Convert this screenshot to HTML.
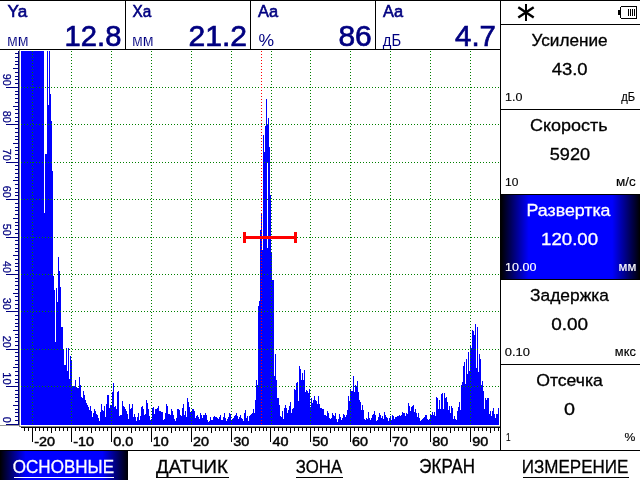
<!DOCTYPE html>
<html><head><meta charset="utf-8"><title>A-scan</title>
<style>
html,body{margin:0;padding:0;background:#fff;width:640px;height:480px;overflow:hidden}
svg{display:block;font-family:"Liberation Sans",sans-serif;will-change:transform}
</style></head><body>
<svg width="640" height="480" viewBox="0 0 640 480">
<defs>
<linearGradient id="hg" x1="0" x2="1" y1="0" y2="0">
<stop offset="0" stop-color="#000000"/><stop offset="0.2" stop-color="#0000ff"/><stop offset="0.8" stop-color="#0000ff"/><stop offset="1" stop-color="#000000"/>
</linearGradient>
</defs>
<rect x="0" y="0" width="640" height="1" fill="#000" shape-rendering="crispEdges"/>
<rect x="0" y="49" width="501" height="1" fill="#000" shape-rendering="crispEdges"/>
<rect x="125" y="0" width="1" height="50" fill="#000" shape-rendering="crispEdges"/>
<rect x="250" y="0" width="1" height="50" fill="#000" shape-rendering="crispEdges"/>
<rect x="375" y="0" width="1" height="50" fill="#000" shape-rendering="crispEdges"/>
<rect x="500" y="0" width="1" height="451" fill="#000" shape-rendering="crispEdges"/>
<rect x="500" y="24" width="140" height="1" fill="#000" shape-rendering="crispEdges"/>
<rect x="500" y="109" width="140" height="1" fill="#000" shape-rendering="crispEdges"/>
<rect x="500" y="194" width="140" height="1" fill="#000" shape-rendering="crispEdges"/>
<rect x="500" y="279" width="140" height="1" fill="#000" shape-rendering="crispEdges"/>
<rect x="500" y="364" width="140" height="1" fill="#000" shape-rendering="crispEdges"/>
<rect x="0" y="450" width="640" height="1" fill="#000" shape-rendering="crispEdges"/>
<rect x="19" y="50" width="1" height="377" fill="#808080" shape-rendering="crispEdges"/>
<rect x="19" y="426" width="481" height="1" fill="#808080" shape-rendering="crispEdges"/>
<rect x="21" y="427" width="480" height="1" fill="#000" shape-rendering="crispEdges"/>
<rect x="0" y="425" width="20" height="1" fill="#9a9a9a" shape-rendering="crispEdges"/>
<rect x="18" y="51" width="1" height="374" fill="#000080" shape-rendering="crispEdges"/>
<path d="M21 51h23V425h-23zM44 213h1V425h-1zM45 154h2V425h-2zM47 51h1V425h-1zM48 105h1V425h-1zM49 51h1V425h-1zM50 94h1V425h-1zM51 121h1V425h-1zM52 171h1V425h-1zM53 276h1V425h-1zM54 290h1V425h-1zM55 342h1V425h-1zM56 288h1V425h-1zM57 302h1V425h-1zM58 257h1V425h-1zM59 271h1V425h-1zM60 287h1V425h-1zM61 327h2V425h-2zM63 350h1V425h-1zM64 365h2V425h-2zM66 348h1V425h-1zM67 371h1V425h-1zM68 348h1V425h-1zM69 379h1V425h-1zM70 356h1V425h-1zM71 361h1V425h-1zM72 386h3V425h-3zM75 380h1V425h-1zM76 387h1V425h-1zM77 388h2V425h-2zM79 377h1V425h-1zM80 385h1V425h-1zM81 397h1V425h-1zM82 398h1V425h-1zM83 391h1V425h-1zM84 395h1V425h-1zM85 400h1V425h-1zM86 403h1V425h-1zM87 405h1V425h-1zM88 407h1V425h-1zM89 410h1V425h-1zM90 406h1V425h-1zM91 411h1V425h-1zM92 417h1V425h-1zM93 413h1V425h-1zM94 409h1V425h-1zM95 411h1V425h-1zM96 414h1V425h-1zM97 415h1V425h-1zM98 418h1V425h-1zM99 421h1V425h-1zM100 412h1V425h-1zM101 404h1V425h-1zM102 410h1V425h-1zM103 411h1V425h-1zM104 406h1V425h-1zM105 417h1V425h-1zM106 404h1V425h-1zM107 395h2V425h-2zM109 408h1V425h-1zM110 405h2V425h-2zM112 392h1V425h-1zM113 383h1V425h-1zM114 407h1V425h-1zM115 406h1V425h-1zM116 409h1V425h-1zM117 392h1V425h-1zM118 391h1V425h-1zM119 416h1V425h-1zM120 415h2V425h-2zM122 401h1V425h-1zM123 406h1V425h-1zM124 407h1V425h-1zM125 409h1V425h-1zM126 411h1V425h-1zM127 414h1V425h-1zM128 419h1V425h-1zM129 404h1V425h-1zM130 409h1V425h-1zM131 408h1V425h-1zM132 404h1V425h-1zM133 417h1V425h-1zM134 414h1V425h-1zM135 417h1V425h-1zM136 421h1V425h-1zM137 417h1V425h-1zM138 413h1V425h-1zM139 420h1V425h-1zM140 416h1V425h-1zM141 407h1V425h-1zM142 406h1V425h-1zM143 409h1V425h-1zM144 415h1V425h-1zM145 414h1V425h-1zM146 400h1V425h-1zM147 403h1V425h-1zM148 409h1V425h-1zM149 416h1V425h-1zM150 420h1V425h-1zM151 419h1V425h-1zM152 408h1V425h-1zM153 407h1V425h-1zM154 414h1V425h-1zM155 409h2V425h-2zM157 408h1V425h-1zM158 406h1V425h-1zM159 411h2V425h-2zM161 412h2V425h-2zM163 420h1V425h-1zM164 419h1V425h-1zM165 413h1V425h-1zM166 404h1V425h-1zM167 406h1V425h-1zM168 414h2V425h-2zM170 415h1V425h-1zM171 409h1V425h-1zM172 411h1V425h-1zM173 415h1V425h-1zM174 419h1V425h-1zM175 421h1V425h-1zM176 418h1V425h-1zM177 409h2V425h-2zM179 410h1V425h-1zM180 415h1V425h-1zM181 416h1V425h-1zM182 408h1V425h-1zM183 404h1V425h-1zM184 415h1V425h-1zM185 411h1V425h-1zM186 417h1V425h-1zM187 398h1V425h-1zM188 402h1V425h-1zM189 407h1V425h-1zM190 412h1V425h-1zM191 411h1V425h-1zM192 409h2V425h-2zM194 411h1V425h-1zM195 418h1V425h-1zM196 416h1V425h-1zM197 415h1V425h-1zM198 417h1V425h-1zM199 419h1V425h-1zM200 413h1V425h-1zM201 415h1V425h-1zM202 418h1V425h-1zM203 415h2V425h-2zM205 413h1V425h-1zM206 415h1V425h-1zM207 420h1V425h-1zM208 422h1V425h-1zM209 421h1V425h-1zM210 417h1V425h-1zM211 420h2V425h-2zM213 417h1V425h-1zM214 416h1V425h-1zM215 417h2V425h-2zM217 418h1V425h-1zM218 419h1V425h-1zM219 417h1V425h-1zM220 415h1V425h-1zM221 420h2V425h-2zM223 417h1V425h-1zM224 413h1V425h-1zM225 418h1V425h-1zM226 421h1V425h-1zM227 419h1V425h-1zM228 417h1V425h-1zM229 413h1V425h-1zM230 414h1V425h-1zM231 420h1V425h-1zM232 419h1V425h-1zM233 418h1V425h-1zM234 416h1V425h-1zM235 415h1V425h-1zM236 413h1V425h-1zM237 416h1V425h-1zM238 419h1V425h-1zM239 417h1V425h-1zM240 415h1V425h-1zM241 418h1V425h-1zM242 419h1V425h-1zM243 421h1V425h-1zM244 413h1V425h-1zM245 410h1V425h-1zM246 418h1V425h-1zM247 416h1V425h-1zM248 421h1V425h-1zM249 416h1V425h-1zM250 415h1V425h-1zM251 414h1V425h-1zM252 413h1V425h-1zM253 409h1V425h-1zM254 413h1V425h-1zM255 400h1V425h-1zM256 380h1V425h-1zM257 385h1V425h-1zM258 306h1V425h-1zM259 301h1V425h-1zM260 230h1V425h-1zM261 213h1V425h-1zM262 250h1V425h-1zM263 135h1V425h-1zM264 152h1V425h-1zM265 126h1V425h-1zM266 99h1V425h-1zM267 125h1V425h-1zM268 118h1V425h-1zM269 147h1V425h-1zM270 195h1V425h-1zM271 252h1V425h-1zM272 280h2V425h-2zM274 376h1V425h-1zM275 354h1V425h-1zM276 380h1V425h-1zM277 398h2V425h-2zM279 405h1V425h-1zM280 416h1V425h-1zM281 417h1V425h-1zM282 411h1V425h-1zM283 419h1V425h-1zM284 408h1V425h-1zM285 405h1V425h-1zM286 408h1V425h-1zM287 413h1V425h-1zM288 410h1V425h-1zM289 406h1V425h-1zM290 402h1V425h-1zM291 413h1V425h-1zM292 409h1V425h-1zM293 408h1V425h-1zM294 389h1V425h-1zM295 390h1V425h-1zM296 383h1V425h-1zM297 382h1V425h-1zM298 401h1V425h-1zM299 366h1V425h-1zM300 369h1V425h-1zM301 380h1V425h-1zM302 373h1V425h-1zM303 380h1V425h-1zM304 370h1V425h-1zM305 392h1V425h-1zM306 390h1V425h-1zM307 391h1V425h-1zM308 393h1V425h-1zM309 389h1V425h-1zM310 407h1V425h-1zM311 398h1V425h-1zM312 403h1V425h-1zM313 400h1V425h-1zM314 396h1V425h-1zM315 400h1V425h-1zM316 401h1V425h-1zM317 404h1V425h-1zM318 396h1V425h-1zM319 404h1V425h-1zM320 408h2V425h-2zM322 409h2V425h-2zM324 415h2V425h-2zM326 416h1V425h-1zM327 411h1V425h-1zM328 413h1V425h-1zM329 418h1V425h-1zM330 419h1V425h-1zM331 418h1V425h-1zM332 413h1V425h-1zM333 415h1V425h-1zM334 416h1V425h-1zM335 413h1V425h-1zM336 419h1V425h-1zM337 422h1V425h-1zM338 419h1V425h-1zM339 414h1V425h-1zM340 417h1V425h-1zM341 420h1V425h-1zM342 418h1V425h-1zM343 414h1V425h-1zM344 415h1V425h-1zM345 417h1V425h-1zM346 415h1V425h-1zM347 410h1V425h-1zM348 396h1V425h-1zM349 401h1V425h-1zM350 389h1V425h-1zM351 391h2V425h-2zM353 376h1V425h-1zM354 392h1V425h-1zM355 385h1V425h-1zM356 386h1V425h-1zM357 381h1V425h-1zM358 392h1V425h-1zM359 400h1V425h-1zM360 402h1V425h-1zM361 410h1V425h-1zM362 405h1V425h-1zM363 410h1V425h-1zM364 419h1V425h-1zM365 420h1V425h-1zM366 418h1V425h-1zM367 419h1V425h-1zM368 412h1V425h-1zM369 418h1V425h-1zM370 420h1V425h-1zM371 418h1V425h-1zM372 415h1V425h-1zM373 414h1V425h-1zM374 411h1V425h-1zM375 415h1V425h-1zM376 421h1V425h-1zM377 420h1V425h-1zM378 417h1V425h-1zM379 413h1V425h-1zM380 415h1V425h-1zM381 418h1V425h-1zM382 416h1V425h-1zM383 419h1V425h-1zM384 412h1V425h-1zM385 415h1V425h-1zM386 417h1V425h-1zM387 418h1V425h-1zM388 421h1V425h-1zM389 418h1V425h-1zM390 416h1V425h-1zM391 420h1V425h-1zM392 415h1V425h-1zM393 416h1V425h-1zM394 419h1V425h-1zM395 417h2V425h-2zM397 416h2V425h-2zM399 415h1V425h-1zM400 416h1V425h-1zM401 415h1V425h-1zM402 412h1V425h-1zM403 413h2V425h-2zM405 416h1V425h-1zM406 413h1V425h-1zM407 414h1V425h-1zM408 403h1V425h-1zM409 406h1V425h-1zM410 411h1V425h-1zM411 407h1V425h-1zM412 406h1V425h-1zM413 405h1V425h-1zM414 412h1V425h-1zM415 409h1V425h-1zM416 413h1V425h-1zM417 417h1V425h-1zM418 413h1V425h-1zM419 418h1V425h-1zM420 421h1V425h-1zM421 420h1V425h-1zM422 419h1V425h-1zM423 418h1V425h-1zM424 417h1V425h-1zM425 415h2V425h-2zM427 419h1V425h-1zM428 420h1V425h-1zM429 419h1V425h-1zM430 415h2V425h-2zM432 412h1V425h-1zM433 415h1V425h-1zM434 412h1V425h-1zM435 416h1V425h-1zM436 397h1V425h-1zM437 398h1V425h-1zM438 409h1V425h-1zM439 400h1V425h-1zM440 409h1V425h-1zM441 394h1V425h-1zM442 393h1V425h-1zM443 409h1V425h-1zM444 393h1V425h-1zM445 398h1V425h-1zM446 397h1V425h-1zM447 402h1V425h-1zM448 410h1V425h-1zM449 406h1V425h-1zM450 413h1V425h-1zM451 406h1V425h-1zM452 408h1V425h-1zM453 419h1V425h-1zM454 416h1V425h-1zM455 419h1V425h-1zM456 420h1V425h-1zM457 411h1V425h-1zM458 407h1V425h-1zM459 402h1V425h-1zM460 410h1V425h-1zM461 385h1V425h-1zM462 382h1V425h-1zM463 366h1V425h-1zM464 362h1V425h-1zM465 384h1V425h-1zM466 359h1V425h-1zM467 374h1V425h-1zM468 352h1V425h-1zM469 371h1V425h-1zM470 346h1V425h-1zM471 348h1V425h-1zM472 330h1V425h-1zM473 331h1V425h-1zM474 335h1V425h-1zM475 324h1V425h-1zM476 368h1V425h-1zM477 327h1V425h-1zM478 372h1V425h-1zM479 354h1V425h-1zM480 359h1V425h-1zM481 385h1V425h-1zM482 381h1V425h-1zM483 391h1V425h-1zM484 409h1V425h-1zM485 398h1V425h-1zM486 400h1V425h-1zM487 398h2V425h-2zM489 414h1V425h-1zM490 411h1V425h-1zM491 416h1V425h-1zM492 411h1V425h-1zM493 408h1V425h-1zM494 414h1V425h-1zM495 418h1V425h-1zM496 414h2V425h-2zM498 408h1V425h-1z" fill="#0000ff" shape-rendering="crispEdges"/>
<rect x="267" y="163" width="1" height="85" fill="#fff" shape-rendering="crispEdges"/>
<g stroke="#008000" stroke-width="1" stroke-dasharray="1 2" shape-rendering="crispEdges"><line x1="32.5" y1="51" x2="32.5" y2="425" /><line x1="71.5" y1="51" x2="71.5" y2="425" /><line x1="111.5" y1="51" x2="111.5" y2="425" /><line x1="151.5" y1="51" x2="151.5" y2="425" /><line x1="191.5" y1="51" x2="191.5" y2="425" /><line x1="231.5" y1="51" x2="231.5" y2="425" /><line x1="271.5" y1="51" x2="271.5" y2="425" /><line x1="310.5" y1="51" x2="310.5" y2="425" /><line x1="350.5" y1="51" x2="350.5" y2="425" /><line x1="390.5" y1="51" x2="390.5" y2="425" /><line x1="430.5" y1="51" x2="430.5" y2="425" /><line x1="470.5" y1="51" x2="470.5" y2="425" /></g>
<g stroke="#008000" stroke-width="1" stroke-dasharray="1 2" shape-rendering="crispEdges"><line x1="21" y1="386.5" x2="500" y2="386.5" /><line x1="21" y1="349.5" x2="500" y2="349.5" /><line x1="21" y1="311.5" x2="500" y2="311.5" /><line x1="21" y1="274.5" x2="500" y2="274.5" /><line x1="21" y1="237.5" x2="500" y2="237.5" /><line x1="21" y1="199.5" x2="500" y2="199.5" /><line x1="21" y1="162.5" x2="500" y2="162.5" /><line x1="21" y1="124.5" x2="500" y2="124.5" /><line x1="21" y1="87.5" x2="500" y2="87.5" /></g>
<line x1="261.5" y1="51" x2="261.5" y2="425" stroke="#ff0000" stroke-width="1" stroke-dasharray="1 2" shape-rendering="crispEdges"/>
<rect x="243" y="236" width="54" height="3" fill="#ff0000" shape-rendering="crispEdges"/>
<rect x="243" y="232" width="3" height="11" fill="#ff0000" shape-rendering="crispEdges"/>
<rect x="294" y="232" width="3" height="11" fill="#ff0000" shape-rendering="crispEdges"/>
<rect x="6" y="424" width="13" height="1" fill="#000080" shape-rendering="crispEdges"/>
<rect x="15" y="420" width="4" height="1" fill="#000080" shape-rendering="crispEdges"/>
<rect x="15" y="416" width="4" height="1" fill="#000080" shape-rendering="crispEdges"/>
<rect x="15" y="412" width="4" height="1" fill="#000080" shape-rendering="crispEdges"/>
<rect x="15" y="409" width="4" height="1" fill="#000080" shape-rendering="crispEdges"/>
<rect x="13" y="405" width="6" height="1" fill="#000080" shape-rendering="crispEdges"/>
<rect x="15" y="401" width="4" height="1" fill="#000080" shape-rendering="crispEdges"/>
<rect x="15" y="397" width="4" height="1" fill="#000080" shape-rendering="crispEdges"/>
<rect x="15" y="394" width="4" height="1" fill="#000080" shape-rendering="crispEdges"/>
<rect x="15" y="390" width="4" height="1" fill="#000080" shape-rendering="crispEdges"/>
<rect x="6" y="386" width="13" height="1" fill="#000080" shape-rendering="crispEdges"/>
<rect x="15" y="382" width="4" height="1" fill="#000080" shape-rendering="crispEdges"/>
<rect x="15" y="379" width="4" height="1" fill="#000080" shape-rendering="crispEdges"/>
<rect x="15" y="375" width="4" height="1" fill="#000080" shape-rendering="crispEdges"/>
<rect x="15" y="371" width="4" height="1" fill="#000080" shape-rendering="crispEdges"/>
<rect x="13" y="367" width="6" height="1" fill="#000080" shape-rendering="crispEdges"/>
<rect x="15" y="364" width="4" height="1" fill="#000080" shape-rendering="crispEdges"/>
<rect x="15" y="360" width="4" height="1" fill="#000080" shape-rendering="crispEdges"/>
<rect x="15" y="356" width="4" height="1" fill="#000080" shape-rendering="crispEdges"/>
<rect x="15" y="352" width="4" height="1" fill="#000080" shape-rendering="crispEdges"/>
<rect x="6" y="349" width="13" height="1" fill="#000080" shape-rendering="crispEdges"/>
<rect x="15" y="345" width="4" height="1" fill="#000080" shape-rendering="crispEdges"/>
<rect x="15" y="341" width="4" height="1" fill="#000080" shape-rendering="crispEdges"/>
<rect x="15" y="337" width="4" height="1" fill="#000080" shape-rendering="crispEdges"/>
<rect x="15" y="334" width="4" height="1" fill="#000080" shape-rendering="crispEdges"/>
<rect x="13" y="330" width="6" height="1" fill="#000080" shape-rendering="crispEdges"/>
<rect x="15" y="326" width="4" height="1" fill="#000080" shape-rendering="crispEdges"/>
<rect x="15" y="323" width="4" height="1" fill="#000080" shape-rendering="crispEdges"/>
<rect x="15" y="319" width="4" height="1" fill="#000080" shape-rendering="crispEdges"/>
<rect x="15" y="315" width="4" height="1" fill="#000080" shape-rendering="crispEdges"/>
<rect x="6" y="311" width="13" height="1" fill="#000080" shape-rendering="crispEdges"/>
<rect x="15" y="308" width="4" height="1" fill="#000080" shape-rendering="crispEdges"/>
<rect x="15" y="304" width="4" height="1" fill="#000080" shape-rendering="crispEdges"/>
<rect x="15" y="300" width="4" height="1" fill="#000080" shape-rendering="crispEdges"/>
<rect x="15" y="296" width="4" height="1" fill="#000080" shape-rendering="crispEdges"/>
<rect x="13" y="293" width="6" height="1" fill="#000080" shape-rendering="crispEdges"/>
<rect x="15" y="289" width="4" height="1" fill="#000080" shape-rendering="crispEdges"/>
<rect x="15" y="285" width="4" height="1" fill="#000080" shape-rendering="crispEdges"/>
<rect x="15" y="281" width="4" height="1" fill="#000080" shape-rendering="crispEdges"/>
<rect x="15" y="278" width="4" height="1" fill="#000080" shape-rendering="crispEdges"/>
<rect x="6" y="274" width="13" height="1" fill="#000080" shape-rendering="crispEdges"/>
<rect x="15" y="270" width="4" height="1" fill="#000080" shape-rendering="crispEdges"/>
<rect x="15" y="266" width="4" height="1" fill="#000080" shape-rendering="crispEdges"/>
<rect x="15" y="263" width="4" height="1" fill="#000080" shape-rendering="crispEdges"/>
<rect x="15" y="259" width="4" height="1" fill="#000080" shape-rendering="crispEdges"/>
<rect x="13" y="255" width="6" height="1" fill="#000080" shape-rendering="crispEdges"/>
<rect x="15" y="251" width="4" height="1" fill="#000080" shape-rendering="crispEdges"/>
<rect x="15" y="248" width="4" height="1" fill="#000080" shape-rendering="crispEdges"/>
<rect x="15" y="244" width="4" height="1" fill="#000080" shape-rendering="crispEdges"/>
<rect x="15" y="240" width="4" height="1" fill="#000080" shape-rendering="crispEdges"/>
<rect x="6" y="237" width="13" height="1" fill="#000080" shape-rendering="crispEdges"/>
<rect x="15" y="233" width="4" height="1" fill="#000080" shape-rendering="crispEdges"/>
<rect x="15" y="229" width="4" height="1" fill="#000080" shape-rendering="crispEdges"/>
<rect x="15" y="225" width="4" height="1" fill="#000080" shape-rendering="crispEdges"/>
<rect x="15" y="222" width="4" height="1" fill="#000080" shape-rendering="crispEdges"/>
<rect x="13" y="218" width="6" height="1" fill="#000080" shape-rendering="crispEdges"/>
<rect x="15" y="214" width="4" height="1" fill="#000080" shape-rendering="crispEdges"/>
<rect x="15" y="210" width="4" height="1" fill="#000080" shape-rendering="crispEdges"/>
<rect x="15" y="207" width="4" height="1" fill="#000080" shape-rendering="crispEdges"/>
<rect x="15" y="203" width="4" height="1" fill="#000080" shape-rendering="crispEdges"/>
<rect x="6" y="199" width="13" height="1" fill="#000080" shape-rendering="crispEdges"/>
<rect x="15" y="195" width="4" height="1" fill="#000080" shape-rendering="crispEdges"/>
<rect x="15" y="192" width="4" height="1" fill="#000080" shape-rendering="crispEdges"/>
<rect x="15" y="188" width="4" height="1" fill="#000080" shape-rendering="crispEdges"/>
<rect x="15" y="184" width="4" height="1" fill="#000080" shape-rendering="crispEdges"/>
<rect x="13" y="180" width="6" height="1" fill="#000080" shape-rendering="crispEdges"/>
<rect x="15" y="177" width="4" height="1" fill="#000080" shape-rendering="crispEdges"/>
<rect x="15" y="173" width="4" height="1" fill="#000080" shape-rendering="crispEdges"/>
<rect x="15" y="169" width="4" height="1" fill="#000080" shape-rendering="crispEdges"/>
<rect x="15" y="165" width="4" height="1" fill="#000080" shape-rendering="crispEdges"/>
<rect x="6" y="162" width="13" height="1" fill="#000080" shape-rendering="crispEdges"/>
<rect x="15" y="158" width="4" height="1" fill="#000080" shape-rendering="crispEdges"/>
<rect x="15" y="154" width="4" height="1" fill="#000080" shape-rendering="crispEdges"/>
<rect x="15" y="150" width="4" height="1" fill="#000080" shape-rendering="crispEdges"/>
<rect x="15" y="147" width="4" height="1" fill="#000080" shape-rendering="crispEdges"/>
<rect x="13" y="143" width="6" height="1" fill="#000080" shape-rendering="crispEdges"/>
<rect x="15" y="139" width="4" height="1" fill="#000080" shape-rendering="crispEdges"/>
<rect x="15" y="136" width="4" height="1" fill="#000080" shape-rendering="crispEdges"/>
<rect x="15" y="132" width="4" height="1" fill="#000080" shape-rendering="crispEdges"/>
<rect x="15" y="128" width="4" height="1" fill="#000080" shape-rendering="crispEdges"/>
<rect x="6" y="124" width="13" height="1" fill="#000080" shape-rendering="crispEdges"/>
<rect x="15" y="121" width="4" height="1" fill="#000080" shape-rendering="crispEdges"/>
<rect x="15" y="117" width="4" height="1" fill="#000080" shape-rendering="crispEdges"/>
<rect x="15" y="113" width="4" height="1" fill="#000080" shape-rendering="crispEdges"/>
<rect x="15" y="109" width="4" height="1" fill="#000080" shape-rendering="crispEdges"/>
<rect x="13" y="106" width="6" height="1" fill="#000080" shape-rendering="crispEdges"/>
<rect x="15" y="102" width="4" height="1" fill="#000080" shape-rendering="crispEdges"/>
<rect x="15" y="98" width="4" height="1" fill="#000080" shape-rendering="crispEdges"/>
<rect x="15" y="94" width="4" height="1" fill="#000080" shape-rendering="crispEdges"/>
<rect x="15" y="91" width="4" height="1" fill="#000080" shape-rendering="crispEdges"/>
<rect x="6" y="87" width="13" height="1" fill="#000080" shape-rendering="crispEdges"/>
<rect x="15" y="83" width="4" height="1" fill="#000080" shape-rendering="crispEdges"/>
<rect x="15" y="79" width="4" height="1" fill="#000080" shape-rendering="crispEdges"/>
<rect x="15" y="76" width="4" height="1" fill="#000080" shape-rendering="crispEdges"/>
<rect x="15" y="72" width="4" height="1" fill="#000080" shape-rendering="crispEdges"/>
<rect x="13" y="68" width="6" height="1" fill="#000080" shape-rendering="crispEdges"/>
<rect x="15" y="64" width="4" height="1" fill="#000080" shape-rendering="crispEdges"/>
<rect x="15" y="61" width="4" height="1" fill="#000080" shape-rendering="crispEdges"/>
<rect x="15" y="57" width="4" height="1" fill="#000080" shape-rendering="crispEdges"/>
<rect x="15" y="53" width="4" height="1" fill="#000080" shape-rendering="crispEdges"/>
<text transform="translate(3,416.66) rotate(90) scale(0.9426,1)" font-size="11.71" fill="#000080" stroke="#000080" stroke-width="0.25">0</text>
<text transform="translate(3,372.36) rotate(90) scale(0.9561,1)" font-size="11.71" fill="#000080" stroke="#000080" stroke-width="0.25">10</text>
<text transform="translate(3,335.65) rotate(90) scale(0.9328,1)" font-size="11.71" fill="#000080" stroke="#000080" stroke-width="0.25">20</text>
<text transform="translate(3,297.77) rotate(90) scale(0.9238,1)" font-size="11.71" fill="#000080" stroke="#000080" stroke-width="0.25">30</text>
<text transform="translate(3,260.99) rotate(90) scale(0.9063,1)" font-size="11.71" fill="#000080" stroke="#000080" stroke-width="0.25">40</text>
<text transform="translate(3,223.77) rotate(90) scale(0.9238,1)" font-size="11.71" fill="#000080" stroke="#000080" stroke-width="0.25">50</text>
<text transform="translate(3,185.65) rotate(90) scale(0.9328,1)" font-size="11.71" fill="#000080" stroke="#000080" stroke-width="0.25">60</text>
<text transform="translate(3,148.65) rotate(90) scale(0.9328,1)" font-size="11.71" fill="#000080" stroke="#000080" stroke-width="0.25">70</text>
<text transform="translate(3,110.71) rotate(90) scale(0.9283,1)" font-size="11.71" fill="#000080" stroke="#000080" stroke-width="0.25">80</text>
<text transform="translate(3,73.71) rotate(90) scale(0.9283,1)" font-size="11.71" fill="#000080" stroke="#000080" stroke-width="0.25">90</text>
<rect x="24" y="427" width="1" height="4" fill="#000" shape-rendering="crispEdges"/>
<rect x="28" y="427" width="1" height="4" fill="#000" shape-rendering="crispEdges"/>
<rect x="32" y="427" width="1" height="15" fill="#000" shape-rendering="crispEdges"/>
<rect x="35" y="427" width="1" height="4" fill="#000" shape-rendering="crispEdges"/>
<rect x="39" y="427" width="1" height="4" fill="#000" shape-rendering="crispEdges"/>
<rect x="43" y="427" width="1" height="4" fill="#000" shape-rendering="crispEdges"/>
<rect x="47" y="427" width="1" height="4" fill="#000" shape-rendering="crispEdges"/>
<rect x="51" y="427" width="1" height="6" fill="#000" shape-rendering="crispEdges"/>
<rect x="55" y="427" width="1" height="4" fill="#000" shape-rendering="crispEdges"/>
<rect x="59" y="427" width="1" height="4" fill="#000" shape-rendering="crispEdges"/>
<rect x="63" y="427" width="1" height="4" fill="#000" shape-rendering="crispEdges"/>
<rect x="67" y="427" width="1" height="4" fill="#000" shape-rendering="crispEdges"/>
<rect x="71" y="427" width="1" height="15" fill="#000" shape-rendering="crispEdges"/>
<rect x="75" y="427" width="1" height="4" fill="#000" shape-rendering="crispEdges"/>
<rect x="79" y="427" width="1" height="4" fill="#000" shape-rendering="crispEdges"/>
<rect x="83" y="427" width="1" height="4" fill="#000" shape-rendering="crispEdges"/>
<rect x="87" y="427" width="1" height="4" fill="#000" shape-rendering="crispEdges"/>
<rect x="91" y="427" width="1" height="6" fill="#000" shape-rendering="crispEdges"/>
<rect x="95" y="427" width="1" height="4" fill="#000" shape-rendering="crispEdges"/>
<rect x="99" y="427" width="1" height="4" fill="#000" shape-rendering="crispEdges"/>
<rect x="103" y="427" width="1" height="4" fill="#000" shape-rendering="crispEdges"/>
<rect x="107" y="427" width="1" height="4" fill="#000" shape-rendering="crispEdges"/>
<rect x="111" y="427" width="1" height="15" fill="#000" shape-rendering="crispEdges"/>
<rect x="115" y="427" width="1" height="4" fill="#000" shape-rendering="crispEdges"/>
<rect x="119" y="427" width="1" height="4" fill="#000" shape-rendering="crispEdges"/>
<rect x="123" y="427" width="1" height="4" fill="#000" shape-rendering="crispEdges"/>
<rect x="127" y="427" width="1" height="4" fill="#000" shape-rendering="crispEdges"/>
<rect x="131" y="427" width="1" height="6" fill="#000" shape-rendering="crispEdges"/>
<rect x="135" y="427" width="1" height="4" fill="#000" shape-rendering="crispEdges"/>
<rect x="139" y="427" width="1" height="4" fill="#000" shape-rendering="crispEdges"/>
<rect x="143" y="427" width="1" height="4" fill="#000" shape-rendering="crispEdges"/>
<rect x="147" y="427" width="1" height="4" fill="#000" shape-rendering="crispEdges"/>
<rect x="151" y="427" width="1" height="15" fill="#000" shape-rendering="crispEdges"/>
<rect x="155" y="427" width="1" height="4" fill="#000" shape-rendering="crispEdges"/>
<rect x="159" y="427" width="1" height="4" fill="#000" shape-rendering="crispEdges"/>
<rect x="163" y="427" width="1" height="4" fill="#000" shape-rendering="crispEdges"/>
<rect x="167" y="427" width="1" height="4" fill="#000" shape-rendering="crispEdges"/>
<rect x="171" y="427" width="1" height="6" fill="#000" shape-rendering="crispEdges"/>
<rect x="175" y="427" width="1" height="4" fill="#000" shape-rendering="crispEdges"/>
<rect x="179" y="427" width="1" height="4" fill="#000" shape-rendering="crispEdges"/>
<rect x="183" y="427" width="1" height="4" fill="#000" shape-rendering="crispEdges"/>
<rect x="187" y="427" width="1" height="4" fill="#000" shape-rendering="crispEdges"/>
<rect x="191" y="427" width="1" height="15" fill="#000" shape-rendering="crispEdges"/>
<rect x="195" y="427" width="1" height="4" fill="#000" shape-rendering="crispEdges"/>
<rect x="199" y="427" width="1" height="4" fill="#000" shape-rendering="crispEdges"/>
<rect x="203" y="427" width="1" height="4" fill="#000" shape-rendering="crispEdges"/>
<rect x="207" y="427" width="1" height="4" fill="#000" shape-rendering="crispEdges"/>
<rect x="211" y="427" width="1" height="6" fill="#000" shape-rendering="crispEdges"/>
<rect x="215" y="427" width="1" height="4" fill="#000" shape-rendering="crispEdges"/>
<rect x="219" y="427" width="1" height="4" fill="#000" shape-rendering="crispEdges"/>
<rect x="223" y="427" width="1" height="4" fill="#000" shape-rendering="crispEdges"/>
<rect x="227" y="427" width="1" height="4" fill="#000" shape-rendering="crispEdges"/>
<rect x="231" y="427" width="1" height="15" fill="#000" shape-rendering="crispEdges"/>
<rect x="235" y="427" width="1" height="4" fill="#000" shape-rendering="crispEdges"/>
<rect x="239" y="427" width="1" height="4" fill="#000" shape-rendering="crispEdges"/>
<rect x="243" y="427" width="1" height="4" fill="#000" shape-rendering="crispEdges"/>
<rect x="247" y="427" width="1" height="4" fill="#000" shape-rendering="crispEdges"/>
<rect x="251" y="427" width="1" height="6" fill="#000" shape-rendering="crispEdges"/>
<rect x="255" y="427" width="1" height="4" fill="#000" shape-rendering="crispEdges"/>
<rect x="259" y="427" width="1" height="4" fill="#000" shape-rendering="crispEdges"/>
<rect x="263" y="427" width="1" height="4" fill="#000" shape-rendering="crispEdges"/>
<rect x="266" y="427" width="1" height="4" fill="#000" shape-rendering="crispEdges"/>
<rect x="270" y="427" width="1" height="15" fill="#000" shape-rendering="crispEdges"/>
<rect x="274" y="427" width="1" height="4" fill="#000" shape-rendering="crispEdges"/>
<rect x="278" y="427" width="1" height="4" fill="#000" shape-rendering="crispEdges"/>
<rect x="282" y="427" width="1" height="4" fill="#000" shape-rendering="crispEdges"/>
<rect x="286" y="427" width="1" height="4" fill="#000" shape-rendering="crispEdges"/>
<rect x="290" y="427" width="1" height="6" fill="#000" shape-rendering="crispEdges"/>
<rect x="294" y="427" width="1" height="4" fill="#000" shape-rendering="crispEdges"/>
<rect x="298" y="427" width="1" height="4" fill="#000" shape-rendering="crispEdges"/>
<rect x="302" y="427" width="1" height="4" fill="#000" shape-rendering="crispEdges"/>
<rect x="306" y="427" width="1" height="4" fill="#000" shape-rendering="crispEdges"/>
<rect x="310" y="427" width="1" height="15" fill="#000" shape-rendering="crispEdges"/>
<rect x="314" y="427" width="1" height="4" fill="#000" shape-rendering="crispEdges"/>
<rect x="318" y="427" width="1" height="4" fill="#000" shape-rendering="crispEdges"/>
<rect x="322" y="427" width="1" height="4" fill="#000" shape-rendering="crispEdges"/>
<rect x="326" y="427" width="1" height="4" fill="#000" shape-rendering="crispEdges"/>
<rect x="330" y="427" width="1" height="6" fill="#000" shape-rendering="crispEdges"/>
<rect x="334" y="427" width="1" height="4" fill="#000" shape-rendering="crispEdges"/>
<rect x="338" y="427" width="1" height="4" fill="#000" shape-rendering="crispEdges"/>
<rect x="342" y="427" width="1" height="4" fill="#000" shape-rendering="crispEdges"/>
<rect x="346" y="427" width="1" height="4" fill="#000" shape-rendering="crispEdges"/>
<rect x="350" y="427" width="1" height="15" fill="#000" shape-rendering="crispEdges"/>
<rect x="354" y="427" width="1" height="4" fill="#000" shape-rendering="crispEdges"/>
<rect x="358" y="427" width="1" height="4" fill="#000" shape-rendering="crispEdges"/>
<rect x="362" y="427" width="1" height="4" fill="#000" shape-rendering="crispEdges"/>
<rect x="366" y="427" width="1" height="4" fill="#000" shape-rendering="crispEdges"/>
<rect x="370" y="427" width="1" height="6" fill="#000" shape-rendering="crispEdges"/>
<rect x="374" y="427" width="1" height="4" fill="#000" shape-rendering="crispEdges"/>
<rect x="378" y="427" width="1" height="4" fill="#000" shape-rendering="crispEdges"/>
<rect x="382" y="427" width="1" height="4" fill="#000" shape-rendering="crispEdges"/>
<rect x="386" y="427" width="1" height="4" fill="#000" shape-rendering="crispEdges"/>
<rect x="390" y="427" width="1" height="15" fill="#000" shape-rendering="crispEdges"/>
<rect x="394" y="427" width="1" height="4" fill="#000" shape-rendering="crispEdges"/>
<rect x="398" y="427" width="1" height="4" fill="#000" shape-rendering="crispEdges"/>
<rect x="402" y="427" width="1" height="4" fill="#000" shape-rendering="crispEdges"/>
<rect x="406" y="427" width="1" height="4" fill="#000" shape-rendering="crispEdges"/>
<rect x="410" y="427" width="1" height="6" fill="#000" shape-rendering="crispEdges"/>
<rect x="414" y="427" width="1" height="4" fill="#000" shape-rendering="crispEdges"/>
<rect x="418" y="427" width="1" height="4" fill="#000" shape-rendering="crispEdges"/>
<rect x="422" y="427" width="1" height="4" fill="#000" shape-rendering="crispEdges"/>
<rect x="426" y="427" width="1" height="4" fill="#000" shape-rendering="crispEdges"/>
<rect x="430" y="427" width="1" height="15" fill="#000" shape-rendering="crispEdges"/>
<rect x="434" y="427" width="1" height="4" fill="#000" shape-rendering="crispEdges"/>
<rect x="438" y="427" width="1" height="4" fill="#000" shape-rendering="crispEdges"/>
<rect x="442" y="427" width="1" height="4" fill="#000" shape-rendering="crispEdges"/>
<rect x="446" y="427" width="1" height="4" fill="#000" shape-rendering="crispEdges"/>
<rect x="450" y="427" width="1" height="6" fill="#000" shape-rendering="crispEdges"/>
<rect x="454" y="427" width="1" height="4" fill="#000" shape-rendering="crispEdges"/>
<rect x="458" y="427" width="1" height="4" fill="#000" shape-rendering="crispEdges"/>
<rect x="462" y="427" width="1" height="4" fill="#000" shape-rendering="crispEdges"/>
<rect x="466" y="427" width="1" height="4" fill="#000" shape-rendering="crispEdges"/>
<rect x="470" y="427" width="1" height="15" fill="#000" shape-rendering="crispEdges"/>
<rect x="474" y="427" width="1" height="4" fill="#000" shape-rendering="crispEdges"/>
<rect x="478" y="427" width="1" height="4" fill="#000" shape-rendering="crispEdges"/>
<rect x="482" y="427" width="1" height="4" fill="#000" shape-rendering="crispEdges"/>
<rect x="486" y="427" width="1" height="4" fill="#000" shape-rendering="crispEdges"/>
<rect x="490" y="427" width="1" height="6" fill="#000" shape-rendering="crispEdges"/>
<rect x="494" y="427" width="1" height="4" fill="#000" shape-rendering="crispEdges"/>
<rect x="498" y="427" width="1" height="4" fill="#000" shape-rendering="crispEdges"/>
<text transform="translate(34.15,445.80) scale(1.1700,1)" font-size="12.29" fill="#000" stroke="#000" stroke-width="0.45">-20</text>
<text transform="translate(73.15,445.80) scale(1.1700,1)" font-size="12.29" fill="#000" stroke="#000" stroke-width="0.45">-10</text>
<text transform="translate(113.23,445.80) scale(1.1700,1)" font-size="12.29" fill="#000" stroke="#000" stroke-width="0.45">0.0</text>
<text transform="translate(152.72,445.80) scale(1.1700,1)" font-size="12.29" fill="#000" stroke="#000" stroke-width="0.45">10</text>
<text transform="translate(193.08,445.80) scale(1.1700,1)" font-size="12.29" fill="#000" stroke="#000" stroke-width="0.45">20</text>
<text transform="translate(233.23,445.80) scale(1.1700,1)" font-size="12.29" fill="#000" stroke="#000" stroke-width="0.45">30</text>
<text transform="translate(272.51,445.80) scale(1.1700,1)" font-size="12.29" fill="#000" stroke="#000" stroke-width="0.45">40</text>
<text transform="translate(312.23,445.80) scale(1.1700,1)" font-size="12.29" fill="#000" stroke="#000" stroke-width="0.45">50</text>
<text transform="translate(352.08,445.80) scale(1.1700,1)" font-size="12.29" fill="#000" stroke="#000" stroke-width="0.45">60</text>
<text transform="translate(392.08,445.80) scale(1.1700,1)" font-size="12.29" fill="#000" stroke="#000" stroke-width="0.45">70</text>
<text transform="translate(432.15,445.80) scale(1.1700,1)" font-size="12.29" fill="#000" stroke="#000" stroke-width="0.45">80</text>
<text transform="translate(472.15,445.80) scale(1.1700,1)" font-size="12.29" fill="#000" stroke="#000" stroke-width="0.45">90</text>
<text transform="translate(7.57,16.60) scale(1.0065,1)" font-size="16.96" fill="#000080" stroke="#000080" stroke-width="0.6">Ya</text>
<text transform="translate(6.90,45.60) scale(0.9580,1)" font-size="16.42" fill="#000080" stroke="#fff" stroke-width="0.15">мм</text>
<text transform="translate(64.61,45.90) scale(0.9681,1)" font-size="30.14" fill="#000080" stroke="#000080" stroke-width="0.7">12.8</text>
<text transform="translate(132.62,16.60) scale(0.9031,1)" font-size="16.96" fill="#000080" stroke="#000080" stroke-width="0.6">Xa</text>
<text transform="translate(131.90,45.60) scale(0.9580,1)" font-size="16.42" fill="#000080" stroke="#fff" stroke-width="0.15">мм</text>
<text transform="translate(188.50,45.90) scale(0.9980,1)" font-size="30.14" fill="#000080" stroke="#000080" stroke-width="0.7">21.2</text>
<text transform="translate(258.00,16.60) scale(0.9668,1)" font-size="16.96" fill="#000080" stroke="#000080" stroke-width="0.6">Aa</text>
<text transform="translate(258.39,45.60) scale(1.0269,1)" font-size="17.10" fill="#000080">%</text>
<text transform="translate(338.45,45.90) scale(0.9936,1)" font-size="30.14" fill="#000080" stroke="#000080" stroke-width="0.7">86</text>
<text transform="translate(383.00,16.60) scale(0.9668,1)" font-size="16.96" fill="#000080" stroke="#000080" stroke-width="0.6">Aa</text>
<text transform="translate(382.85,45.60) scale(0.8696,1)" font-size="16.96" fill="#000080">дБ</text>
<text transform="translate(455.11,45.90) scale(0.9752,1)" font-size="30.14" fill="#000080" stroke="#000080" stroke-width="0.7">4.7</text>
<g stroke="#000" stroke-linecap="butt"><line x1="526" y1="4" x2="526" y2="21" stroke-width="2"/><line x1="518.3" y1="7.3" x2="533.7" y2="17.5" stroke-width="2.4"/><line x1="518.3" y1="17.5" x2="533.7" y2="7.3" stroke-width="2.4"/></g>
<rect x="620.5" y="6.5" width="16" height="12" fill="none" stroke="#000" stroke-width="1" shape-rendering="crispEdges"/>
<rect x="618" y="10" width="2" height="5" fill="#000" shape-rendering="crispEdges"/>
<rect x="628" y="9" width="1" height="7" fill="#000" shape-rendering="crispEdges"/>
<rect x="630" y="9" width="1" height="7" fill="#000" shape-rendering="crispEdges"/>
<rect x="632" y="9" width="1" height="7" fill="#000" shape-rendering="crispEdges"/>
<rect x="634" y="9" width="1" height="7" fill="#000" shape-rendering="crispEdges"/>
<rect x="620" y="6" width="1" height="1" fill="#fff" shape-rendering="crispEdges"/>
<rect x="620" y="18" width="1" height="1" fill="#fff" shape-rendering="crispEdges"/>
<text transform="translate(531.48,45.50) scale(1.0583,1)" font-size="16.23" fill="#000" stroke="#000" stroke-width="0.3">Усиление</text>
<text transform="translate(551.63,74.50) scale(1.1541,1)" font-size="16.00" fill="#000" stroke="#000" stroke-width="0.3">43.0</text>
<text transform="translate(505.06,101.20) scale(1.0671,1)" font-size="11.71" fill="#000" stroke="#000" stroke-width="0.15">1.0</text>
<text transform="translate(621.29,101.20) scale(0.9413,1)" font-size="11.88" fill="#000" stroke="#000" stroke-width="0.15">дБ</text>
<text transform="translate(530.10,130.50) scale(1.1069,1)" font-size="16.23" fill="#000" stroke="#000" stroke-width="0.3">Скорость</text>
<text transform="translate(549.77,159.50) scale(1.1337,1)" font-size="16.00" fill="#000" stroke="#000" stroke-width="0.3">5920</text>
<text transform="translate(505.10,186.20) scale(1.0244,1)" font-size="11.71" fill="#000" stroke="#000" stroke-width="0.15">10</text>
<text transform="translate(616.05,186.20) scale(1.1253,1)" font-size="12.00" fill="#000" stroke="#000" stroke-width="0.15">м/с</text>
<rect x="501" y="195" width="139" height="84" fill="url(#hg)" shape-rendering="crispEdges"/>
<text transform="translate(526.58,215.50) scale(1.0954,1)" font-size="16.23" fill="#fff" stroke="#fff" stroke-width="0.3">Развертка</text>
<text transform="translate(541.10,244.50) scale(1.1653,1)" font-size="16.00" fill="#fff" stroke="#fff" stroke-width="0.3">120.00</text>
<text transform="translate(505.06,271.20) scale(1.0715,1)" font-size="11.71" fill="#fff" stroke="#fff" stroke-width="0.15">10.00</text>
<text transform="translate(618.60,271.20) scale(1.0855,1)" font-size="11.89" fill="#fff" stroke="#fff" stroke-width="0.15">мм</text>
<text transform="translate(530.09,300.50) scale(1.0708,1)" font-size="16.23" fill="#000" stroke="#000" stroke-width="0.3">Задержка</text>
<text transform="translate(551.24,329.50) scale(1.1865,1)" font-size="16.00" fill="#000" stroke="#000" stroke-width="0.3">0.00</text>
<text transform="translate(504.78,356.20) scale(1.1047,1)" font-size="11.71" fill="#000" stroke="#000" stroke-width="0.15">0.10</text>
<text transform="translate(614.80,356.20) scale(1.0816,1)" font-size="11.89" fill="#000" stroke="#000" stroke-width="0.15">мкс</text>
<text transform="translate(536.21,385.50) scale(1.0872,1)" font-size="16.23" fill="#000" stroke="#000" stroke-width="0.3">Отсечка</text>
<text transform="translate(564.01,414.50) scale(1.2370,1)" font-size="16.00" fill="#000" stroke="#000" stroke-width="0.3">0</text>
<text transform="translate(505.98,441.20) scale(0.7065,1)" font-size="11.71" fill="#000" stroke="#000" stroke-width="0.15">1</text>
<text transform="translate(624.57,441.20) scale(1.0410,1)" font-size="11.71" fill="#000" stroke="#000" stroke-width="0.15">%</text>
<rect x="0" y="451" width="128" height="29" fill="url(#hg)" shape-rendering="crispEdges"/>
<text transform="translate(12.83,472.60) scale(0.8834,1)" font-size="19.28" fill="#fff" stroke="#fff" stroke-width="0.3">ОСНОВНЫЕ</text>
<rect x="14" y="477" width="100" height="1" fill="#fff" shape-rendering="crispEdges"/>
<text transform="translate(156.11,472.60) scale(0.9685,1)" font-size="19.28" fill="#000" stroke="#000" stroke-width="0.3">ДАТЧИК</text>
<rect x="156" y="477" width="73" height="1" fill="#000" shape-rendering="crispEdges"/>
<text transform="translate(295.81,472.60) scale(0.8701,1)" font-size="19.28" fill="#000" stroke="#000" stroke-width="0.3">ЗОНА</text>
<rect x="296" y="477" width="47" height="1" fill="#000" shape-rendering="crispEdges"/>
<text transform="translate(419.37,472.60) scale(0.8789,1)" font-size="19.28" fill="#000" stroke="#000" stroke-width="0.3">ЭКРАН</text>
<text transform="translate(521.84,472.60) scale(0.8831,1)" font-size="19.28" fill="#000" stroke="#000" stroke-width="0.3">ИЗМЕРЕНИЕ</text>
<rect x="523" y="477" width="106" height="1" fill="#000" shape-rendering="crispEdges"/>
</svg>
</body></html>
